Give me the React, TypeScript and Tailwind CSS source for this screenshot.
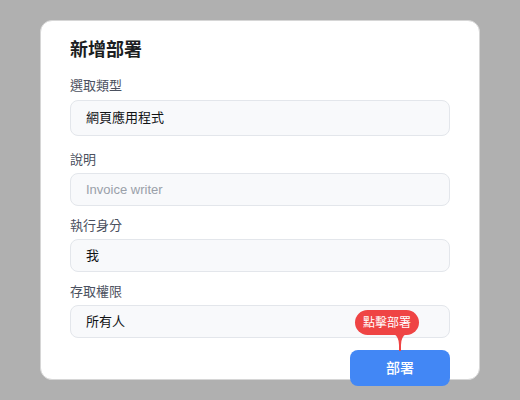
import React from "react";

const font = { fontFamily: '"Liberation Sans", "Noto Sans CJK TC", sans-serif' };

function Label({ children }: { children: React.ReactNode }) {
  return <div className="text-[13px] leading-5 text-[#4b5160]">{children}</div>;
}

function Field({
  value,
  placeholder,
  h,
}: {
  value?: string;
  placeholder?: string;
  h: string;
}) {
  return (
    <div
      className={`${h} w-full rounded-[8px] border border-[#e3e6eb] bg-[#f8f9fb] pl-[15px] pr-4 flex items-center text-[13px]`}
    >
      {value ? (
        <span className="text-[#111315]">{value}</span>
      ) : (
        <span className="text-[#9aa0a9]">{placeholder}</span>
      )}
    </div>
  );
}

export default function App() {
  return (
    <div className="w-[520px] h-[400px] bg-[#b0b0b0] pt-[20px] pl-[40px]" style={font}>
      <div className="w-[440px] h-[360px] rounded-[12px] border border-[#d6d6d6] bg-white px-[29px] pt-[15px] flex flex-col">
        <div className="text-[18px] leading-7 font-bold text-[#1c1e21]">新增部署</div>
        <div className="mt-[12px]">
          <Label>選取類型</Label>
          <div className="mt-[4px]">
            <Field h="h-[36px]" value="網頁應用程式" />
          </div>
        </div>
        <div className="mt-[14px]">
          <Label>說明</Label>
          <div className="mt-[3px]">
            <Field h="h-[33px]" placeholder="Invoice writer" />
          </div>
        </div>
        <div className="mt-[10px]">
          <Label>執行身分</Label>
          <div className="mt-[3px]">
            <Field h="h-[33px]" value="我" />
          </div>
        </div>
        <div className="mt-[10px]">
          <Label>存取權限</Label>
          <div className="mt-[3px]">
            <Field h="h-[33px]" value="所有人" />
          </div>
        </div>
        <div className="mt-[12px] flex justify-end">
          <div className="relative">
            <div className="absolute left-[5px] top-[-40px] h-[25px] w-[64px] rounded-full bg-[#ef4444] text-white text-[12px] flex items-center justify-center">
              點擊部署
            </div>
            <svg
              className="absolute left-[44px] top-[-16px]"
              width="12"
              height="17"
              viewBox="0 0 12 17"
            >
              <path d="M0 0 L12 0 Q7 3 7 11 L7 17 L5 17 L5 11 Q5 3 0 0 Z" fill="#ef4444" />
            </svg>
            <button className="h-[36px] w-[100px] rounded-[8px] bg-[#4287f5] text-white text-[14px] font-medium">
              部署
            </button>
          </div>
        </div>
      </div>
    </div>
  );
}
